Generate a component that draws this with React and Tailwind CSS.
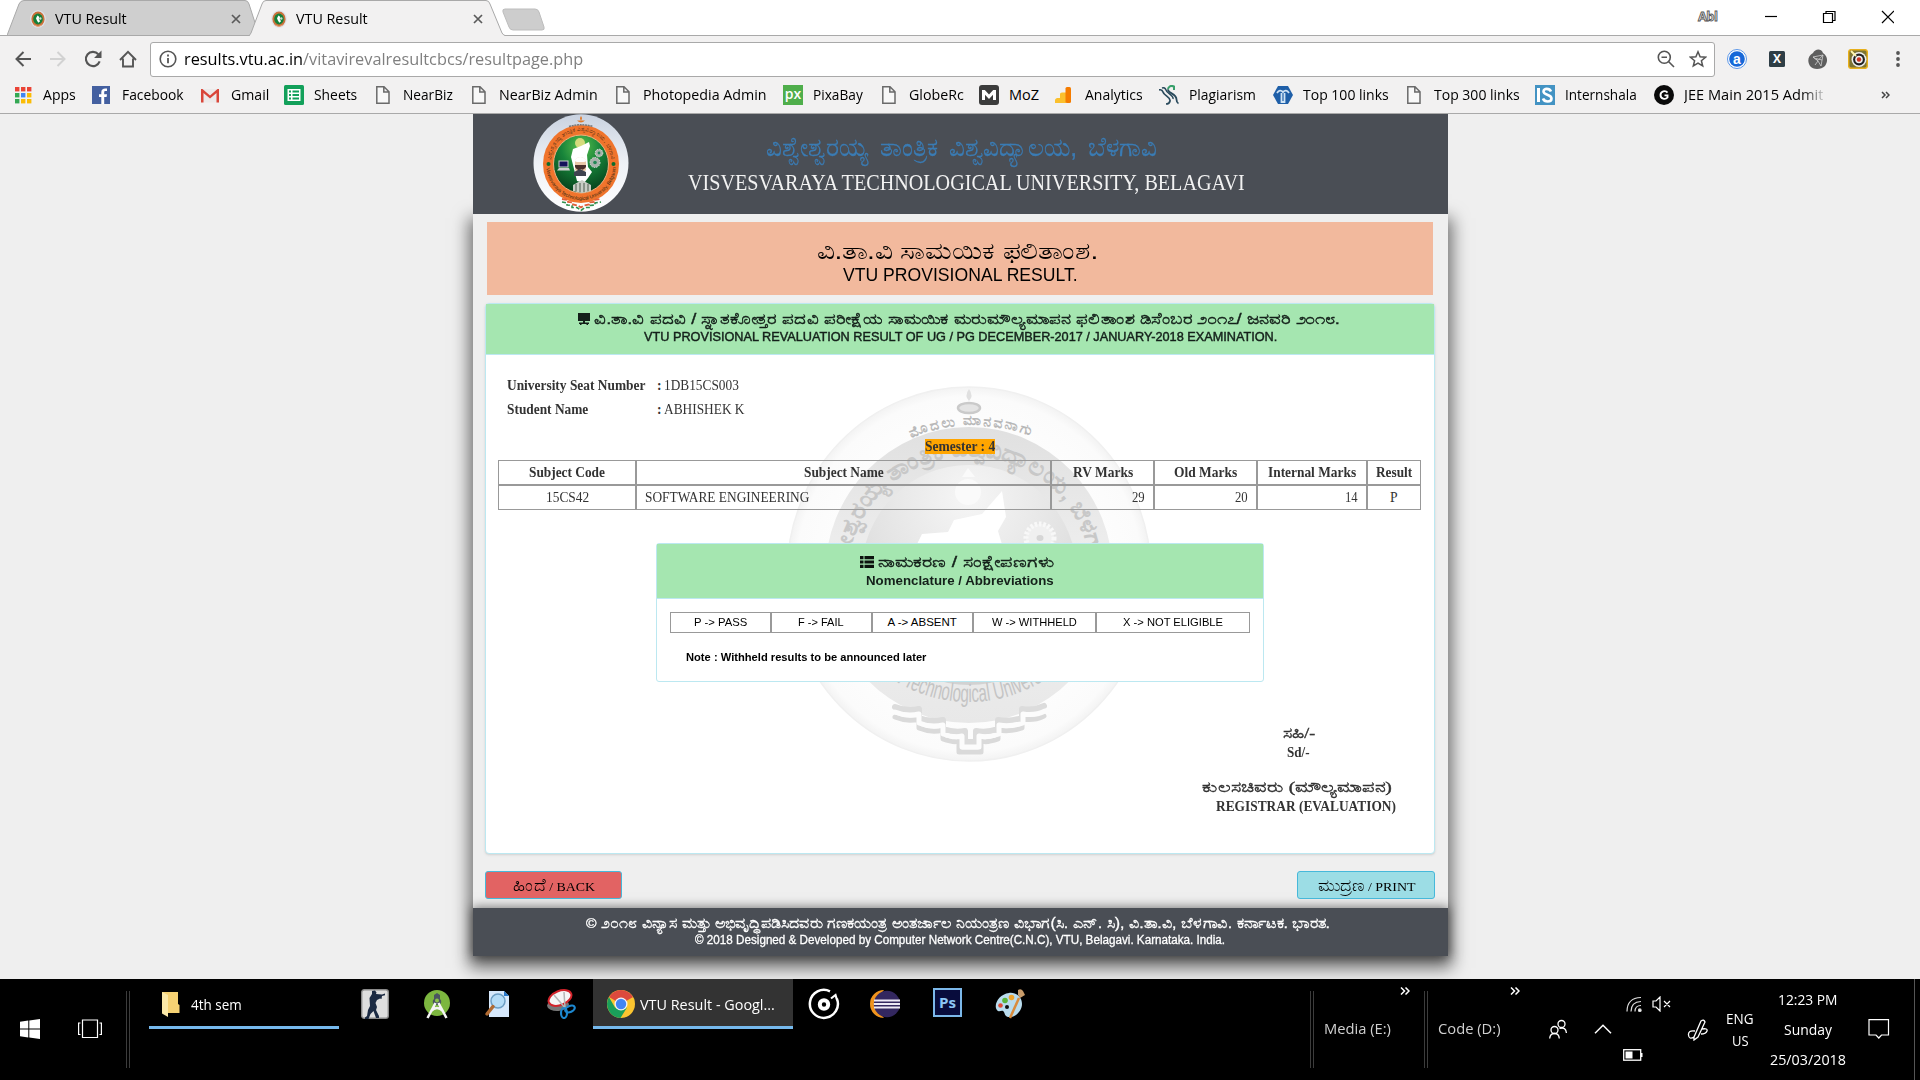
import React, { useLayoutEffect, useRef, useState } from "react";

const SANS = "font-['Open_Sans','Noto_Sans',sans-serif]";
const ARIAL = "font-['Liberation_Sans',sans-serif]";
const SERIF = "font-['Liberation_Serif',serif]";

// One line of text stretched to the width of its own box.
function Fit({ className = "", inner = "", children }) {
  const outerRef = useRef(null);
  const innerRef = useRef(null);
  const [scale, setScale] = useState(1);
  useLayoutEffect(() => {
    const have = innerRef.current.offsetWidth;
    const want = outerRef.current.clientWidth;
    if (have > 0) setScale(want / have);
  }, []);
  return (
    <span ref={outerRef} className={`block shrink-0 ${className}`}>
      <span
        ref={innerRef}
        className={`inline-block origin-left whitespace-nowrap align-top ${inner}`}
        style={{ transform: `scaleX(${scale})` }}
      >
        {children}
      </span>
    </span>
  );
}

/* ---------- browser chrome ---------- */

function Favicon() {
  return (
    <svg viewBox="0 0 16 18" className="h-[18px] w-4 shrink-0">
      <ellipse cx="8" cy="9" rx="7.8" ry="8.8" fill="#dfe3ea" />
      <ellipse cx="8" cy="9" rx="6.6" ry="7.4" fill="#c9713a" />
      <ellipse cx="8" cy="9" rx="4.8" ry="5.4" fill="#14803a" />
      <path d="M7.5 5.5l1.6 1.2-.3 2.5 1.3 2-1.8 1.5-1.5-2.4-.8-2z" fill="#fff" />
      <circle cx="10.300" cy="8.500" r="1.200" fill="#cfe0d2" />
      <path d="M4 15l4 1.600 4-1.600" stroke="#e7a27a" fill="none" />
    </svg>
  );
}

function TabClose() {
  return (
    <svg viewBox="0 0 10 10" className="size-[10px] shrink-0">
      <path d="M1 1l8 8M9 1l-8 8" stroke="#5a5a5a" strokeWidth="1.700" />
    </svg>
  );
}

function Tab({ active }) {
  return (
    <div className={active ? "relative z-10 -ml-[9px] h-[36px] w-[258px]" : "relative h-[35px] w-[251px]"}>
      <svg
        viewBox={active ? "0 0 258 36" : "0 0 251 35"}
        className="absolute inset-0 size-full"
        preserveAspectRatio="none"
      >
        {active ? (
          <path d="M0 36L2 33L13 4Q14 .5 17 .5H237Q240 .5 241 4L253 33Q254 35.500 258 36" fill="#f2f1f1" stroke="#a9a9a9" />
        ) : (
          <path d="M0 35.500L12 4Q13.500.5 17 .5H238Q241 .5 242 4L251 32V35.500" fill="#cfcfcf" stroke="#a9a9a9" />
        )}
      </svg>
      <div className={active ? "relative flex h-[38px] items-center pl-[22px]" : "relative flex h-[38px] items-center pl-[23px]"}>
        <Favicon />
        <Fit className={`ml-[9px] w-[72px] text-[14.500px] leading-[36px] text-black ${SANS}`}>VTU Result</Fit>
        <span className={active ? "ml-[105px]" : "ml-[104px]"}>
          <TabClose />
        </span>
      </div>
    </div>
  );
}

function TabStrip() {
  return (
    <div className="flex h-[36px] border-b border-[#a9a9a9] bg-white pl-[7px]">
      <Tab />
      <Tab active />
      <svg viewBox="0 0 46 24" className="-ml-[6px] mt-[8px] h-6 w-[46px]">
        <path d="M4 1H34Q37 1 38 4L43 19Q44 22 41 22H12Q9 22 8 19L2 4Q1 1 4 1z" fill="#cdcdcd" stroke="#bdbdbd" />
      </svg>
      <span className="ml-auto mt-[7px] w-[23px] text-[13px] font-bold leading-[18px] tracking-[-0.6px] text-[#ddd] [-webkit-text-stroke:0.8px_#555] font-['Open_Sans',sans-serif]">
        Abl
      </span>
      <svg viewBox="0 0 130 14" className="ml-[43px] mr-[26px] mt-[10px] h-[14px] w-[130px]" fill="none" stroke="#000" strokeWidth="1.200">
        <path d="M1 6.500H13" />
        <path d="M59.500 3.500h9v9h-9zM62 3.500V1.500h9v9h-2.500" />
        <path d="M118 1l12 12M130 1l-12 12" />
      </svg>
    </div>
  );
}

function Toolbar() {
  return (
    <div className="flex h-[44px] items-center bg-[#f2f1f1] pt-[2px]">
      <svg viewBox="0 0 16 16" className="ml-[15px] size-4" fill="none" stroke="#555" strokeWidth="2">
        <path d="M16 8H1.500M8.500 1L1.500 8l7 7" />
      </svg>
      <svg viewBox="0 0 16 16" className="ml-[19px] size-4" fill="none" stroke="#d2d2d2" strokeWidth="2">
        <path d="M0 8H14.500M7.500 1l7 7-7 7" />
      </svg>
      <svg viewBox="0 0 17 17" className="ml-[18px] size-[18px]" fill="none" stroke="#555" strokeWidth="2">
        <path d="M14.800 10.800A6.700 6.700 0 1 1 13.500 4" />
        <path d="M16.500.5V7.500H9.500z" fill="#555" stroke="none" />
      </svg>
      <svg viewBox="0 0 18 18" className="ml-[17px] size-[18px]" fill="none" stroke="#555" strokeWidth="1.900">
        <path d="M1 10L9 1.800 17 10M4 8.500V16.500H14V8.500" />
      </svg>
      <div className="ml-[13px] flex h-[35px] w-[1565px] items-center rounded-[3px] border border-[#a9a9a9] bg-white">
        <svg viewBox="0 0 18 18" className="ml-[8px] size-[18px]" fill="none" stroke="#555" strokeWidth="1.600">
          <circle cx="9" cy="9" r="7.800" />
          <path d="M9 8V13.200M9 4.600V6.400" strokeWidth="1.800" />
        </svg>
        <Fit className={`ml-[7px] w-[399px] text-[17px] leading-[30px] text-[#808080] ${SANS}`}>
          <span className="text-black">results.vtu.ac.in</span>/vitavirevalresultcbcs/resultpage.php
        </Fit>
        <svg viewBox="0 0 18 18" className="ml-auto size-[18px]" fill="none" stroke="#555" strokeWidth="1.600">
          <circle cx="7.300" cy="7.300" r="6" />
          <path d="M4.500 7.300h5.500M11.500 11.500l5.500 5.500" />
        </svg>
        <svg viewBox="0 0 18 18" className="ml-[14px] mr-[7px] size-[18px]" fill="none" stroke="#555" strokeWidth="1.500">
          <path d="M9 1.800l2.100 5 5.400.4-4.100 3.500 1.300 5.300L9 13.100 4.300 16l1.300-5.300L1.500 7.200l5.400-.4z" />
        </svg>
      </div>
      <svg viewBox="0 0 20 20" className="ml-[12px] size-5">
        <circle cx="10" cy="10" r="9.500" fill="#fff" stroke="#5c97e8" />
        <circle cx="10" cy="10" r="7.800" fill="#1668d8" />
        <text x="10" y="14.500" textAnchor="middle" fontSize="14" fontWeight="700" fill="#fff" fontFamily="Liberation Sans">a</text>
      </svg>
      <svg viewBox="0 0 16 16" className="ml-[22px] size-4">
        <rect width="16" height="16" rx="1.500" fill="#2f3e46" />
        <text x="8" y="12.200" textAnchor="middle" fontSize="12" fontWeight="700" fill="#fff" fontFamily="Open Sans">X</text>
      </svg>
      <svg viewBox="0 0 20 20" className="ml-[23px] size-5">
        <path d="M5 4C7 0 13-1 15 4c5 3 5 9 2 13-4 4-12 4-15 0C-1 12 0 7 5 4z" fill="#5e5e5e" />
        <path d="M5 8l10-2-2 11-3-5zM5 8l5 3.500L15 6M10 12l-3 4M8 9.500l6 1.500" stroke="#cfcfcf" strokeWidth=".8" fill="none" />
      </svg>
      <svg viewBox="0 0 20 20" className="ml-[20px] size-5">
        <rect x=".7" y=".7" width="18.600" height="18.600" rx="2.500" fill="#7d7434" stroke="#e8b01c" strokeWidth="1.500" />
        <circle cx="11" cy="10.500" r="7.500" fill="#eee" />
        <circle cx="11" cy="10.500" r="5.900" fill="#222" />
        <circle cx="11" cy="10.500" r="3.800" fill="#eee" />
        <circle cx="11" cy="10.500" r="2.200" fill="#c32" />
        <path d="M3 2l5 5" stroke="#fff6b0" strokeWidth="2" />
      </svg>
      <svg viewBox="0 0 4 18" className="ml-[28px] h-[18px] w-1" fill="#555">
        <circle cx="2" cy="3" r="1.900" />
        <circle cx="2" cy="9" r="1.900" />
        <circle cx="2" cy="15" r="1.900" />
      </svg>
    </div>
  );
}

const PageIcon = (
  <svg viewBox="0 0 20 20" className="size-5" fill="#f8f8f8" stroke="#6a6a6a" strokeWidth="1.500">
    <path d="M3.800 1.700h7.200l5 5v11.600H3.800zM10.800 1.700v5.200H16" />
  </svg>
);

const icons = {
  apps: (
    <svg viewBox="0 0 20 20" className="size-5">
      {["#ea4335", "#ea4335", "#ea4335", "#34a853", "#4285f4", "#fbbc05", "#34a853", "#fbbc05", "#fbbc05"].map((c, i) => (
        <rect key={i} x={2 + (i % 3) * 6} y={2 + Math.floor(i / 3) * 6} width="4.400" height="4.400" fill={c} />
      ))}
    </svg>
  ),
  facebook: (
    <svg viewBox="0 0 20 20" className="size-5">
      <rect y="1" width="18" height="18" fill="#4460a0" />
      <path d="M12.200 19v-7h2.400l.4-2.800h-2.800V7.500c0-.9.300-1.400 1.400-1.400H15V3.600c-3.500-.5-5.700.5-5.700 3.600v2H7V12h2.300v7z" fill="#fff" />
    </svg>
  ),
  gmail: (
    <svg viewBox="0 0 20 20" className="size-5">
      <rect y="4" width="18" height="13.500" fill="#eceaea" />
      <path d="M0 17.500V4h1.500L9 10.500 16.500 4H18v13.500h-2.500V8L9 13.500 2.500 8v9.500z" fill="#d9463a" />
    </svg>
  ),
  sheets: (
    <svg viewBox="0 0 20 20" className="size-5">
      <rect width="20" height="20" rx="1.500" fill="#12a05a" />
      <path d="M3.500 4h13v12h-13z" fill="#fff" />
      <path d="M5 5.500h2v2H5zM8.500 5.500H15v2H8.500zM5 9h2v2H5zM8.500 9H15v2H8.500zM5 12.500h2v2H5zM8.500 12.500H15v2H8.500z" fill="#12a05a" />
    </svg>
  ),
  page: PageIcon,
  px: (
    <svg viewBox="0 0 20 20" className="size-5">
      <rect width="20" height="20" fill="#4fae4b" />
      <text x="10" y="14" textAnchor="middle" fontSize="14" fontWeight="600" fill="#fff" fontFamily="Open Sans">px</text>
    </svg>
  ),
  moz: (
    <svg viewBox="0 0 20 20" className="size-5">
      <rect width="20" height="20" rx="3" fill="#3c3c3c" />
      <path d="M3 15V5h2.800L10 9.500 14.200 5H17v10h-3V9.800l-4 4.200-4-4.200V15z" fill="#fff" />
    </svg>
  ),
  analytics: (
    <svg viewBox="0 0 20 20" className="size-5">
      <path d="M0 18q-1-4 2-5h3V9q0-1.500 2-1.500h4V18z" fill="#fbc02d" />
      <rect x="10.500" y="2" width="5.500" height="16" rx="1.500" fill="#f57c00" />
    </svg>
  ),
  plag: (
    <svg viewBox="0 0 20 20" className="size-5" fill="none">
      <path d="M0 5q3-1 4 2c1 4 8 5 7 9q-.5 3-4 3" stroke="#2a4a5c" strokeWidth="1.700" />
      <path d="M3 3q3-1 4 2c1 4 8 5 7 9" stroke="#2a4a5c" strokeWidth="1.500" />
      <path d="M15 5V1.500C12 0 9 1.500 9 4.500" stroke="#39a06b" strokeWidth="2" />
      <path d="M9 4.500c0 4 8.500 4 8.500 10q0 3 2 4" stroke="#2a4a5c" strokeWidth="1.800" />
    </svg>
  ),
  tool: (
    <svg viewBox="0 0 20 20" className="size-5">
      <path d="M5 1h10l5 9-5 9H5L0 10z" fill="#1f5fa8" />
      <path d="M4 8c2-3 4-3 6-1 2-2 4-2 6 1M8.500 8v9h3V8" fill="none" stroke="#cfe3f5" strokeWidth="1.800" />
    </svg>
  ),
  is: (
    <svg viewBox="0 0 20 20" className="size-5">
      <rect width="20" height="20" fill="#4393c3" />
      <path d="M2 3h3v14H2z" fill="#fff" />
      <path d="M16 6.500C14.500 3 8.500 3 8.500 6.500c0 4 8 2.500 8 7 0 4-7 4-8.500 0" fill="none" stroke="#fff" strokeWidth="2.600" />
    </svg>
  ),
  g: (
    <svg viewBox="0 0 20 20" className="size-5">
      <circle cx="10" cy="10" r="10" fill="#0a0a0a" />
      <path d="M13.500 7.600C11.500 5 6.500 6 6.500 10s5 5 7 2.500V10.400H10.500" fill="none" stroke="#fff" strokeWidth="1.900" />
    </svg>
  ),
};

const bookmarks = [
  ["apps", "Apps", "w-[79px]", "w-[33px]"],
  ["facebook", "Facebook", "w-[109px]", "w-[62px]"],
  ["gmail", "Gmail", "w-[83px]", "w-[38px]"],
  ["sheets", "Sheets", "w-[89px]", "w-[43px]"],
  ["page", "NearBiz", "w-[96px]", "w-[50px]"],
  ["page", "NearBiz Admin", "w-[144px]", "w-[99px]"],
  ["page", "Photopedia Admin", "w-[170px]", "w-[124px]"],
  ["px", "PixaBay", "w-[96px]", "w-[50px]"],
  ["page", "GlobeRc", "w-[100px]", "w-[55px]"],
  ["moz", "MoZ", "w-[76px]", "w-[30px]"],
  ["analytics", "Analytics", "w-[104px]", "w-[58px]"],
  ["plag", "Plagiarism", "w-[114px]", "w-[67px]"],
  ["tool", "Top 100 links", "w-[131px]", "w-[86px]"],
  ["page", "Top 300 links", "w-[131px]", "w-[86px]"],
  ["is", "Internshala", "w-[119px]", "w-[72px]"],
  ["g", "JEE Main 2015 Admit", "w-[227px]", "w-[139px]"],
];

function BookmarksBar() {
  return (
    <div className="flex h-[34px] items-center border-b border-[#a9a9a9] bg-[#f2f1f1] pl-[13px]">
      {bookmarks.map(([icon, label, cell, w]) => (
        <div key={label} className={`flex shrink-0 items-center ${cell}`}>
          <span className="mb-[3px] block size-5 shrink-0">{icons[icon]}</span>
          <Fit
            className={`ml-[10px] mb-[3px] text-[14.500px] leading-[22px] text-black ${w} ${SANS}`}
            inner={icon === "g" ? "bg-linear-to-r from-black from-82% to-[#ccc] bg-clip-text text-transparent" : ""}
          >
            {label}
          </Fit>
        </div>
      ))}
      <svg viewBox="0 0 9 8" className="mb-[4px] h-2 w-[9px]" fill="none" stroke="#444" strokeWidth="1.500">
        <path d="M1 1l3 3-3 3M5 1l3 3-3 3" />
      </svg>
    </div>
  );
}

/* ---------- university page ---------- */

function Crest() {
  return (
    <svg viewBox="0 0 96 98" className="h-[98px] w-[96px]">
      <defs>
        <linearGradient id="crestRim" x1="0" y1="0" x2="0" y2="1">
          <stop offset="0" stopColor="#c9d2e0" />
          <stop offset=".5" stopColor="#eef1f6" />
          <stop offset="1" stopColor="#fff" />
        </linearGradient>
        <radialGradient id="crestCore" cx=".5" cy=".2" r=".8">
          <stop offset="0" stopColor="#5cc04c" />
          <stop offset=".45" stopColor="#17843a" />
          <stop offset="1" stopColor="#07401c" />
        </radialGradient>
        <path id="crestTop" d="M17.500 50A30.500 33 0 0 1 78.500 50" />
        <path id="crestBottom" d="M13 50A35 36 0 0 0 83 50" />
      </defs>
      <ellipse cx="48" cy="49" rx="47.500" ry="48.800" fill="url(#crestRim)" />
      <ellipse cx="48" cy="50" rx="38" ry="39" fill="#f0742c" />
      <ellipse cx="48" cy="50" rx="27.500" ry="29" fill="url(#crestCore)" stroke="#f0b080" />
      <text fontSize="5.500" fill="#4a2a12" fontFamily="Liberation Sans, sans-serif">
        <textPath href="#crestTop" startOffset="4" textLength="92">ವಿಶ್ವೇಶ್ವರಯ್ಯ ತಾಂತ್ರಿಕ ವಿಶ್ವವಿದ್ಯಾಲಯ, ಬೆಳಗಾವಿ</textPath>
      </text>
      <text fontSize="5" fill="#3a2a12" fontFamily="Liberation Sans, sans-serif">
        <textPath href="#crestBottom" startOffset="4" textLength="104">Visvesvaraya Technological University, Belgaum</textPath>
      </text>
      <circle cx="15.500" cy="50" r="2" fill="#0b6b2c" />
      <circle cx="80.500" cy="50" r="2" fill="#0b6b2c" />
      <path d="M44 6.500q4 4 8 0zM48 2q2 2.500 0 4.500-2-2-0-4.500" fill="#e07a2c" />
      <path d="M36 12.500q12-3.500 24 0" stroke="#777" fill="none" strokeWidth="1.500" strokeDasharray="2 .7" />
      <circle cx="47" cy="29" r="5" fill="#f7e58a" opacity=".8" />
      <path d="M56 28l1 4-3 9 1 12 4 5-4 6-4 5-7-2-3-12-3-12 2-8 8-3z" fill="#fff" />
      <path d="M42 46q5-6 11 0v10q-5 7-11 0z" fill="#e9c8a8" />
      <path d="M41 47q6-8 13 0l-3 1h-7z" fill="#fff" />
      <path d="M42 51h11v2q-3 4-5 2-3 3-6-2z" fill="#4a2f2a" />
      <path d="M41 58l6-3 6 3v4H41z" fill="#3f4450" />
      <rect x="26" y="47" width="9" height="6" fill="#14125a" stroke="#ccc" />
      <path d="M24 56.500h13l-1-2.500H26z" fill="#cfcfcf" />
      <g fill="#a8b3ac" stroke="#dde3de" strokeDasharray="1.500 1">
        <circle cx="66" cy="39" r="3.800" />
        <circle cx="62" cy="48.500" r="5" />
      </g>
      <circle cx="66" cy="39" r="1.400" fill="#285" />
      <circle cx="62" cy="48.500" r="1.800" fill="#285" />
      <path d="M40 77v-6l9-5 9 5v6l-9 2z" fill="#c9cdc6" />
      <path d="M43 77v-7M47 78v-9M51 78v-9M55 77v-7" stroke="#4c5a4c" />
      <path d="M29 88l5 1v2l5 .5v2l5 0 4 3 4-3 5 0v-2l5-.5v-2l6-1" stroke="#2f8f4c" strokeWidth="1.600" fill="none" strokeDasharray="4 2" />
      <path d="M29 85l6 1v2l5 .5v2l5 1 3 2 3-2 5-1v-2l5-.5v-2l7-1" stroke="#e0603a" strokeWidth="1.800" fill="none" strokeDasharray="5 2" />
    </svg>
  );
}

function Watermark() {
  return (
    <svg viewBox="0 0 366 376" className="h-[376px] w-[366px]">
      <defs>
        <radialGradient id="wmOuter">
          <stop offset=".75" stopColor="#fdfdfd" />
          <stop offset=".95" stopColor="#fbfbfb" />
          <stop offset="1" stopColor="#f3f3f3" />
        </radialGradient>
        <linearGradient id="wmRing" x1="0" y1="0" x2="0" y2="1">
          <stop offset="0" stopColor="#e0e0e0" />
          <stop offset=".5" stopColor="#f0f0f0" />
          <stop offset="1" stopColor="#e8e8e8" />
        </linearGradient>
        <radialGradient id="wmCore" cx=".5" cy=".15" r=".8">
          <stop offset="0" stopColor="#f6f6f6" />
          <stop offset=".6" stopColor="#e2e2e2" />
          <stop offset="1" stopColor="#d2d2d2" />
        </radialGradient>
        <path id="wmMotto" d="M125 52Q184 27 248 51" />
        <path id="wmTop" d="M61 192A122 122 0 0 1 305 192" />
        <path id="wmBottom" d="M48 200A136 132 0 0 0 318 200" />
      </defs>
      <ellipse cx="183" cy="188" rx="182" ry="187" fill="url(#wmOuter)" stroke="#f0f0f0" strokeWidth="1.500" />
      <ellipse cx="183" cy="189" rx="144" ry="148" fill="url(#wmRing)" />
      <ellipse cx="183" cy="189" rx="108" ry="110" fill="url(#wmCore)" />
      <text fontSize="14" fill="#b8b8b8" fontWeight="700" fontFamily="Liberation Sans, sans-serif">
        <textPath href="#wmMotto" textLength="122">ಮೊದಲು ಮಾನವನಾಗು</textPath>
      </text>
      <text fontSize="24" fill="#c8c8c8" fontWeight="700" fontFamily="Liberation Sans, sans-serif">
        <textPath href="#wmTop" textLength="376" lengthAdjust="spacingAndGlyphs">ವಿಶ್ವೇಶ್ವರಯ್ಯ ತಾಂತ್ರಿಕ ವಿಶ್ವವಿದ್ಯಾಲಯ, ಬೆಳಗಾವಿ</textPath>
      </text>
      <text fontSize="25" fill="#c4c4c4" fontFamily="Liberation Sans Narrow, Liberation Sans, sans-serif">
        <textPath href="#wmBottom" startOffset="32" textLength="320" lengthAdjust="spacingAndGlyphs">Visvesvaraya Technological  University, Belagavi</textPath>
      </text>
      <ellipse cx="183" cy="22" rx="11" ry="5" fill="#e4e4e4" stroke="#cacaca" strokeWidth="2.500" />
      <path d="M183 3q5 7 0 12-5-5 0-12" fill="#e0e0e0" />
      <circle cx="182" cy="106" r="13" fill="#fafafa" />
      <path d="M176 91l6-9 7 9z" fill="#fafafa" />
      <path d="M216 105l-20 23-28 6-6 12-26 2-6 12 4 45 60 30 30-50-12-40 8-14z" fill="#fff" />
      <circle cx="254" cy="152" r="14" fill="#f0f0f0" stroke="#f8f8f8" strokeWidth="5" strokeDasharray="2.500 1.800" />
      <ellipse cx="254" cy="152" rx="3.500" ry="3" fill="#d6d6d6" />
      <g fill="none" strokeLinejoin="round" strokeLinecap="round">
        <path d="M109 321q12 5 24 2v9q12 5 24 2v9q11 4 22 2v11h11v-11q11 2 22-2v-9q12 2 24-2v-9q12 2 22-3" stroke="#dcdcdc" strokeWidth="6" />
        <path d="M109 331q12 5 24 2v9q12 5 24 2v9q11 4 16 2v11h22v-11q6 2 17-2v-9q12 2 24-2v-9q12 2 22-3" stroke="#dadada" strokeWidth="5" />
        <path d="M109 326q12 5 24 2v9q12 5 24 2v9q11 4 19 2v11h17v-11q9 2 20-2v-9q12 2 24-2v-9q12 2 22-3" stroke="#fcfcfc" strokeWidth="5" />
      </g>
    </svg>
  );
}

function Banner() {
  return (
    <header className="flex h-[100px] bg-[#4a4e55]">
      <div className="ml-[60px] w-[96px]">
        <Crest />
      </div>
      <div className="ml-[59px] flex w-[557px] flex-col items-center">
        <Fit
          className={`mr-[11px] mt-[16px] h-[38px] w-[391px] text-[26px] leading-[34px] text-[#3a7cb5] [-webkit-text-stroke:0.3px_#3a7cb5] ${ARIAL}`}
          inner="[word-spacing:4px]"
        >
          ವಿಶ್ವೇಶ್ವರಯ್ಯ ತಾಂತ್ರಿಕ ವಿಶ್ವವಿದ್ಯಾಲಯ, ಬೆಳಗಾವಿ
        </Fit>
        <Fit className={`h-[30px] w-[557px] text-[22.500px] leading-[30px] text-[#f2f2f2] ${SERIF}`}>
          VISVESVARAYA TECHNOLOGICAL UNIVERSITY, BELAGAVI
        </Fit>
      </div>
    </header>
  );
}

const cols = "grid grid-cols-[138px_415px_103px_103px_110px_54px]";
const cell = "flex h-[25px] items-center justify-center border border-[#999]";

function MarksTable() {
  return (
    <div className={`w-[923px] text-[13.700px] leading-[24px] text-[#333] ${SERIF}`}>
      <div className={`${cols} font-bold`}>
        <div className={cell}><Fit className="w-[76px]">Subject Code</Fit></div>
        <div className={cell}><Fit className="w-[80px]">Subject Name</Fit></div>
        <div className={cell}><Fit className="w-[60px]">RV Marks</Fit></div>
        <div className={cell}><Fit className="w-[63px]">Old Marks</Fit></div>
        <div className={cell}><Fit className="w-[88px]">Internal Marks</Fit></div>
        <div className={cell}><Fit className="w-[36px]">Result</Fit></div>
      </div>
      <div className={cols}>
        <div className={cell}><Fit className="w-[43px]">15CS42</Fit></div>
        <div className={`${cell} !justify-start pl-[8px]`}><Fit className="w-[164px]">SOFTWARE ENGINEERING</Fit></div>
        <div className={`${cell} !justify-end pr-[8px]`}><Fit className="w-[13px]">29</Fit></div>
        <div className={`${cell} !justify-end pr-[8px]`}><Fit className="w-[13px]">20</Fit></div>
        <div className={`${cell} !justify-end pr-[8px]`}><Fit className="w-[13px]">14</Fit></div>
        <div className={cell}><Fit className="w-[8px]">P</Fit></div>
      </div>
    </div>
  );
}

const abbr = "flex h-[21px] items-center justify-center border border-[#999] pr-[1px]";

function Nomenclature() {
  return (
    <section className="relative h-[139px] w-[608px] rounded-[3px] border border-[#bce8f1] bg-white">
      <div className={`flex h-[55px] flex-col items-center border-b border-[#bce8f1] bg-[#a5e6b0] pt-[8px] pr-[1px] font-bold text-[#14201a] ${ARIAL}`}>
        <div className="flex h-[19px] items-center pr-[5px]">
          <svg viewBox="0 0 14 12" className="h-3 w-[14px]" fill="#0c130e">
            <path d="M0 0h3.500v3.200H0zM4.500 0H14v3.200H4.500zM0 4.400h3.500v3.200H0zM4.500 4.400H14v3.200H4.500zM0 8.800h3.500V12H0zM4.500 8.800H14V12H4.500z" />
          </svg>
          <Fit className="ml-[4px] w-[177px] text-[15px] leading-[17px]" inner="font-normal [-webkit-text-stroke:0.4px_#14201a]">
            ನಾಮಕರಣ / ಸಂಕ್ಷೇಪಣಗಳು
          </Fit>
        </div>
        <Fit className="w-[188px] text-[13px] leading-[20px]">Nomenclature / Abbreviations</Fit>
      </div>
      <div className={`ml-[13px] mt-[13px] grid w-[580px] grid-cols-[101px_101px_101px_123px_154px] text-[11.500px] leading-[19px] text-black ${ARIAL}`}>
        <div className={abbr}><Fit className="w-[53px]">P -&gt; PASS</Fit></div>
        <div className={abbr}><Fit className="w-[46px]">F -&gt; FAIL</Fit></div>
        <div className={abbr}><Fit className="w-[69px]">A -&gt; ABSENT</Fit></div>
        <div className={abbr}><Fit className="w-[85px]">W -&gt; WITHHELD</Fit></div>
        <div className={abbr}><Fit className="w-[100px]">X -&gt; NOT ELIGIBLE</Fit></div>
      </div>
      <Fit className={`ml-[29px] mt-[14px] w-[240px] text-[11.300px] font-bold leading-[20px] text-black ${ARIAL}`}>
        Note : Withheld results to be announced later
      </Fit>
    </section>
  );
}

function ResultPanel() {
  return (
    <section className="relative ml-[12px] mt-[8px] h-[551px] w-[950px] rounded-[4px] border border-[#bce8f1] bg-white shadow-sm">
      <div className="absolute left-[300px] top-[82px]">
        <Watermark />
      </div>
      <div className={`relative flex h-[51px] flex-col items-center border-b border-[#bce8f1] bg-[#a5e6b0] pt-[7px] font-bold text-[#14201a] ${ARIAL}`}>
        <div className="flex h-[16px] items-center pr-[3px]">
          <svg viewBox="0 0 12 12" className="h-3 w-3" fill="#14201a">
            <path d="M0 0h12v8H0zM5 8h2v1.500H5zM1 9.500h10V11H1zM2 11h1.500v1H2zM8.500 11H10v1H8.500z" />
          </svg>
          <Fit className="ml-[4px] w-[746px] text-[15px] leading-[16px]" inner="font-normal [-webkit-text-stroke:0.4px_#14201a]">
            ವಿ.ತಾ.ವಿ ಪದವಿ / ಸ್ನಾತಕೋತ್ತರ ಪದವಿ ಪರೀಕ್ಷೆಯ ಸಾಮಯಿಕ ಮರುಮೌಲ್ಯಮಾಪನ ಫಲಿತಾಂಶ ಡಿಸೆಂಬರ ೨೦೧೭/ ಜನವರಿ ೨೦೧೮.
          </Fit>
        </div>
        <Fit className="w-[633px] text-[13.300px] leading-[19px]" inner="font-normal [-webkit-text-stroke:0.45px_#14201a]">
          VTU PROVISIONAL REVALUATION RESULT OF UG / PG DECEMBER-2017 / JANUARY-2018 EXAMINATION.
        </Fit>
      </div>

      <div className={`relative ml-[21px] mt-[19px] grid grid-cols-[150px_1fr] text-[13.700px] leading-[24px] text-[#333] ${SERIF}`}>
        <Fit className="w-[138px] font-bold">University Seat Number</Fit>
        <div className="flex"><b className="w-[7px]">:</b><Fit className="w-[75px]">1DB15CS003</Fit></div>
        <Fit className="w-[81px] font-bold">Student Name</Fit>
        <div className="flex"><b className="w-[7px]">:</b><Fit className="w-[81px]">ABHISHEK K</Fit></div>
      </div>

      <div className={`relative mt-[17px] flex justify-center text-[13.700px] font-bold leading-[15px] text-[#333] ${SERIF}`}>
        <Fit className="h-[15px] w-[70px] bg-[#ffa500]">Semester : 4</Fit>
      </div>
      <div className="relative ml-[12px] mt-[6px]">
        <MarksTable />
      </div>
      <div className="ml-[170px] mt-[33px]">
        <Nomenclature />
      </div>

      <div className={`relative mt-[42px] flex flex-col text-[13.700px] leading-[19px] text-[#333] ${SERIF}`}>
        <Fit className="ml-[797px] w-[32px] text-[15px]" inner="[-webkit-text-stroke:0.4px_#333]">ಸಹಿ/-</Fit>
        <Fit className="ml-[801px] w-[23px] font-bold">Sd/-</Fit>
        <Fit className="ml-[716px] mt-[16px] w-[190px] text-[15px]" inner="[-webkit-text-stroke:0.4px_#333]">
          ಕುಲಸಚಿವರು (ಮೌಲ್ಯಮಾಪನ)
        </Fit>
        <Fit className="ml-[730px] w-[180px] font-bold">REGISTRAR (EVALUATION)</Fit>
      </div>
    </section>
  );
}

function ResultPage() {
  return (
    <main className="flex h-[865px] justify-center overflow-hidden bg-[#efefef]">
      <div className="ml-px h-[842px] w-[975px]">
        <div className="relative z-10"><Banner /></div>
        <div className="h-[742px] bg-[#efefef] shadow-[0_8px_16px_4px_rgba(0,0,0,0.55)]">
          <div className={`ml-[14px] flex h-[81px] flex-col pt-[8px] text-black ${ARIAL}`}>
            <div className="flex h-[73px] w-[946px] flex-col items-center bg-[#f2b99d] pt-[15px]">
              <Fit className="mr-[6px] h-[27px] w-[281px] text-[24px] leading-[27px]">ವಿ.ತಾ.ವಿ ಸಾಮಯಿಕ ಫಲಿತಾಂಶ.</Fit>
              <Fit className="w-[235px] text-[18.500px] leading-[21px]">VTU PROVISIONAL RESULT.</Fit>
            </div>
          </div>
          <ResultPanel />
          <div className={`ml-[12px] mt-[17px] flex h-[28px] w-[950px] justify-between text-[13.500px] leading-[28px] text-black ${SERIF}`}>
            <button className="flex w-[137px] rounded-[3px] border border-[#46b8da] bg-[#e26363] pl-[26px]">
              <Fit className="w-[82px]"><span className="text-[17px]">ಹಿಂದೆ</span> / BACK</Fit>
            </button>
            <button className="flex w-[138px] rounded-[3px] border border-[#46b8da] bg-[#9cdde5] pl-[18px]">
              <Fit className="w-[98px]"><span className="text-[17px]">ಮುದ್ರಣ</span> / PRINT</Fit>
            </button>
          </div>
          <footer className={`mt-[9px] flex h-[48px] flex-col items-center bg-[#4a4e55] pt-[7px] pr-[4px] text-white shadow-[0_0_10px_1px_rgba(0,0,0,0.5)] ${ARIAL}`}>
            <Fit className="mr-[1px] w-[744px] text-[14px] leading-[16px] [-webkit-text-stroke:0.3px_#fff]">
              <span className="text-[12.500px]">©</span> ೨೦೧೮ ವಿನ್ಯಾಸ ಮತ್ತು ಅಭಿವೃದ್ಧಿಪಡಿಸಿದವರು ಗಣಕಯಂತ್ರ ಅಂತರ್ಜಾಲ ನಿಯಂತ್ರಣ ವಿಭಾಗ(ಸಿ. ಎನ್. ಸಿ), ವಿ.ತಾ.ವಿ, ಬೆಳಗಾವಿ. ಕರ್ನಾಟಕ. ಭಾರತ.
            </Fit>
            <Fit className="ml-[2px] w-[530px] text-[12px] leading-[16px] [-webkit-text-stroke:0.3px_#fff]">
              © 2018 Designed &amp; Developed by Computer Network Centre(C.N.C), VTU, Belagavi. Karnataka. India.
            </Fit>
          </footer>
        </div>
      </div>
    </main>
  );
}

/* ---------- taskbar ---------- */

const Grip = ({ className = "" }) => (
  <div className={`mt-[12px] h-[77px] w-[4px] shrink-0 border-x border-[#3c3c3c] ${className}`} />
);

const More = ({ className = "" }) => (
  <svg viewBox="0 0 10 8" className={`h-2 w-[10px] shrink-0 ${className}`} fill="none" stroke="#fff" strokeWidth="1.500">
    <path d="M1 .5L4.500 4 1 7.500M5.500 .5L9 4 5.500 7.500" />
  </svg>
);

function ChromeIcon() {
  return (
    <svg viewBox="0 0 28 28" className="size-7 shrink-0">
      <circle cx="14" cy="14" r="14" fill="#fbc530" />
      <path d="M14 14L1.900 7A14 14 0 0 1 26.100 7z" fill="#dc4a3d" />
      <path d="M1.900 7A14 14 0 0 0 13.500 28L20 17.500 14 20 8 17.500z" fill="#1a9f5a" />
      <circle cx="14" cy="14" r="6.500" fill="#f4f4f4" />
      <circle cx="14" cy="14" r="5.200" fill="#4285f4" />
    </svg>
  );
}

function PinnedIcons() {
  return (
    <>
      <svg viewBox="0 0 28 30" className="ml-[22px] h-[30px] w-[28px] shrink-0">
        <rect x=".7" y=".7" width="26.600" height="28.600" rx="2.500" fill="#dedede" stroke="#8a8a8a" strokeWidth="1.400" />
        <path d="M11 2l3-.5 1.500 2L15 5l6 .5 3-1v1.800l-3 .7-.5 3-1.500-.5-3 1.500-1.500 3 1.500 4-1 3 3 6v2h-3l-2.500-7-3 3-2 5H4v-1.500l2-1.500 1-6 2-4-.5-8L11 5z" fill="#1b2a42" />
      </svg>
      <svg viewBox="0 0 28 30" className="ml-[34px] h-[30px] w-[28px] shrink-0">
        <circle cx="14" cy="14" r="13" fill="#7cb63f" />
        <path d="M11 6l3-2 3 2v4a3.500 3.500 0 0 1-1 6h-4a3.500 3.500 0 0 1-1-6z" fill="#4a5560" />
        <circle cx="14" cy="11.500" r="2" fill="#8bc34a" />
        <path d="M12.500 14L4.500 29M15.500 14l8 15M8 22q6-6 12 0" fill="none" stroke="#f5f5f5" strokeWidth="2.500" />
      </svg>
      <svg viewBox="0 0 28 30" className="ml-[33px] h-[30px] w-[28px] shrink-0">
        <path d="M5 2h15l5 5v21H5z" fill="#d6e8fb" />
        <path d="M20 2l5 5h-5z" fill="#2677c9" />
        <circle cx="14" cy="12" r="7" fill="#b4dcf7" stroke="#6d9ec4" strokeWidth="1.500" />
        <path d="M9 17.500L3 25" stroke="#b06a32" strokeWidth="3.500" strokeLinecap="round" />
      </svg>
      <svg viewBox="0 0 30 30" className="ml-[34px] h-[30px] w-[30px] shrink-0">
        <ellipse cx="12" cy="16" rx="11" ry="6" fill="#777" transform="rotate(-4 12 16)" />
        <ellipse cx="14" cy="9" rx="12" ry="7" fill="#f6f6f6" stroke="#d2232a" strokeWidth="2" transform="rotate(-22 14 9)" />
        <path d="M8 6l12 14M18 3l1 16" stroke="#b5b5b5" strokeWidth="1.500" />
        <ellipse cx="18" cy="24" rx="3" ry="5" fill="none" stroke="#1c87cf" strokeWidth="2.200" />
        <ellipse cx="24" cy="20" rx="5" ry="3" fill="none" stroke="#1c87cf" strokeWidth="2.200" transform="rotate(-25 24 20)" />
      </svg>
    </>
  );
}

function RunningIcons() {
  return (
    <>
      <svg viewBox="0 0 32 32" className="ml-[15px] -mt-px size-8 shrink-0" fill="none" stroke="#fff">
        <path d="M28.800 10.500A14 14 0 1 1 22 3.300" strokeWidth="2.500" />
        <circle cx="16" cy="16.500" r="4.200" strokeWidth="4" />
        <path d="M23 10.500l4.500-3.500 1.200 4" strokeWidth="2.200" />
      </svg>
      <svg viewBox="0 0 30 30" className="ml-[30px] size-[30px] shrink-0">
        <path d="M14 1A14 14 0 0 0 14 29Q1 15 14 1z" fill="#f0941e" />
        <circle cx="17" cy="15" r="13.200" fill="#33275f" />
        <path d="M4 11.500h26M3.800 15H30M4 18.500h26" stroke="#eeeaf6" strokeWidth="1.900" />
      </svg>
      <svg viewBox="0 0 29 29" className="ml-[33px] -mt-px size-[29px] shrink-0">
        <rect x="1" y="1" width="27" height="27" fill="#080c3c" stroke="#7cb8ea" strokeWidth="2" />
        <text x="14.500" y="19.500" textAnchor="middle" fontSize="15" fontWeight="700" fill="#8cc6f5" fontFamily="Open Sans" textLength="17" lengthAdjust="spacingAndGlyphs">Ps</text>
      </svg>
      <svg viewBox="0 0 30 30" className="ml-[33px] size-[30px] shrink-0">
        <path d="M14 4C4 5-2 16 2 21c2 3 4 0 6 1s1 5 5 6c6 1 14-5 14-13 0-7-6-12-13-11z" fill="#b9dcee" />
        <circle cx="10" cy="11.500" r="2.800" fill="#5cb53c" />
        <circle cx="16.500" cy="8.500" r="2.800" fill="#f0a42c" />
        <circle cx="5.500" cy="16.500" r="2.300" fill="#e04a34" />
        <circle cx="12" cy="18" r="2" fill="#111" />
        <path d="M15 29l9-20" stroke="#d98b3c" strokeWidth="2.500" />
        <path d="M23 1q3-2 5 1l2 4-5 3-2-3z" fill="#c99c6a" />
      </svg>
    </>
  );
}

function Taskbar() {
  return (
    <div className={`flex h-[101px] bg-black text-[14.500px] leading-[22px] text-white ${SANS}`}>
      <svg viewBox="0 0 20 20" className="ml-[20px] mt-[40px] size-5 shrink-0" fill="#fff">
        <path d="M0 2.800L8.300 1.600V9.500H0zM9.300 1.400L20 0V9.500H9.300zM0 10.500H8.300V18.400L0 17.200zM9.300 10.500H20V20L9.300 18.600z" />
      </svg>
      <svg viewBox="0 0 24 20" className="ml-[38px] mt-[40px] h-5 w-6 shrink-0" fill="none" stroke="#fff" strokeWidth="1.200">
        <path d="M4.500 1h15v17.500h-15zM2.500 4H.6v11.500H2.500M21.500 4h1.900v11.500H21.500" />
      </svg>
      <Grip className="ml-[24px]" />

      <div className="ml-[19px] flex h-[50px] w-[190px] border-b-[3px] border-[#76b9ed] pl-[12px]">
        <svg viewBox="0 0 20 26" className="mt-[12px] h-[26px] w-5">
          <path d="M1 1H17V13L18.500 14V22H5z" fill="#f6d273" />
          <path d="M1 1L7 4V26L1 22.500z" fill="#fce9a8" />
        </svg>
        <Fit className="ml-[10px] mt-[15px] w-[51px]">4th sem</Fit>
      </div>

      <div className="flex pt-[10px]">
        <PinnedIcons />
      </div>

      <div className="ml-[17px] flex h-[50px] w-[200px] border-b-[3px] border-[#76b9ed] bg-[#333] pl-[14px]">
        <span className="mt-[11px]"><ChromeIcon /></span>
        <Fit className="ml-[5px] mt-[15px] w-[135px]">VTU Result - Googl...</Fit>
      </div>

      <div className="flex pt-[10px]">
        <RunningIcons />
      </div>

      <div className="ml-auto flex">
        <Grip />
        <Fit className="ml-[10px] mt-[39px] w-[67px] text-[#d0d0d0]">Media (E:)</Fit>
        <More className="ml-[9px] mt-[8px]" />
        <Grip className="ml-[14px]" />
        <Fit className="ml-[10px] mt-[39px] w-[63px] text-[#d0d0d0]">Code (D:)</Fit>
        <More className="ml-[9px] mt-[8px]" />
        <svg viewBox="0 0 18 20" className="ml-[29px] mt-[40px] h-5 w-[18px]" fill="none" stroke="#fff" strokeWidth="1.300">
          <circle cx="12.500" cy="5" r="3.500" />
          <circle cx="5.500" cy="11" r="3.500" />
          <path d="M.7 19.500Q1 14.500 5.500 14.500T10.300 19.500M10.500 9.500Q17 7.500 17.400 14" />
        </svg>
        <svg viewBox="0 0 18 10" className="ml-[27px] mt-[45px] h-[10px] w-[18px]" fill="none" stroke="#fff" strokeWidth="1.500">
          <path d="M1 9.200L9 1.200 17 9.200" />
        </svg>
        <div className="ml-[13px] w-[49px]">
          <div className="flex pt-[17px]">
            <svg viewBox="0 0 18 17" className="h-[17px] w-[18px]" fill="none" stroke="#ddd" strokeWidth="1.200">
              <path d="M2 15.500Q2 2 16 1.500M6 15.500Q6 6 16 5.500M10 15.500q0-6 6-6" />
              <circle cx="14.800" cy="14.200" r="1.300" fill="#fff" />
            </svg>
            <svg viewBox="0 0 20 16" className="ml-[9px] h-4 w-5" fill="none" stroke="#fff" strokeWidth="1.200">
              <path d="M1 5h3l4-4v14l-4-4H1zM12 5l6 6M18 5l-6 6" />
            </svg>
          </div>
          <svg viewBox="0 0 20 12" className="-ml-[2px] mt-[36px] h-3 w-5">
            <rect x=".7" y=".7" width="17" height="10.500" fill="none" stroke="#fff" strokeWidth="1.300" />
            <path d="M2.500 2.500H9.500V9.500H2.500zM18 4h1.500v4H18z" fill="#fff" />
          </svg>
        </div>
        <svg viewBox="0 0 22 22" className="ml-[13px] mt-[40px] size-[22px]" fill="none" stroke="#fff" strokeWidth="1.300">
          <path d="M7 18L14 2Q17 0 18 3L11 18 7 21zM8 12Q1 11 1.500 16T7 18M15 10q6-1 5 2t-6 3" />
        </svg>
        <div className="ml-[17px] mt-[29px] flex w-[28px] flex-col items-center">
          <Fit className="w-[28px]">ENG</Fit>
          <Fit className="w-[17px]">US</Fit>
        </div>
        <div className="ml-[15px] mt-[10px] flex w-[78px] flex-col items-center gap-[8px]">
          <Fit className="w-[60px]">12:23 PM</Fit>
          <Fit className="w-[48px]">Sunday</Fit>
          <Fit className="w-[76px]">25/03/2018</Fit>
        </div>
        <svg viewBox="0 0 22 20" className="ml-[21px] mt-[40px] h-5 w-[22px]" fill="none" stroke="#fff" strokeWidth="1.200">
          <path d="M1 .7H20.500V16H13.500L10.800 19 8 16H1z" />
        </svg>
        <div className="ml-[24px] mr-[5px] h-[101px] w-px bg-[#555]" />
      </div>
    </div>
  );
}

export default function App() {
  return (
    <div className="h-[1080px] w-[1920px] overflow-hidden bg-[#efefef]">
      <TabStrip />
      <Toolbar />
      <BookmarksBar />
      <ResultPage />
      <Taskbar />
    </div>
  );
}
